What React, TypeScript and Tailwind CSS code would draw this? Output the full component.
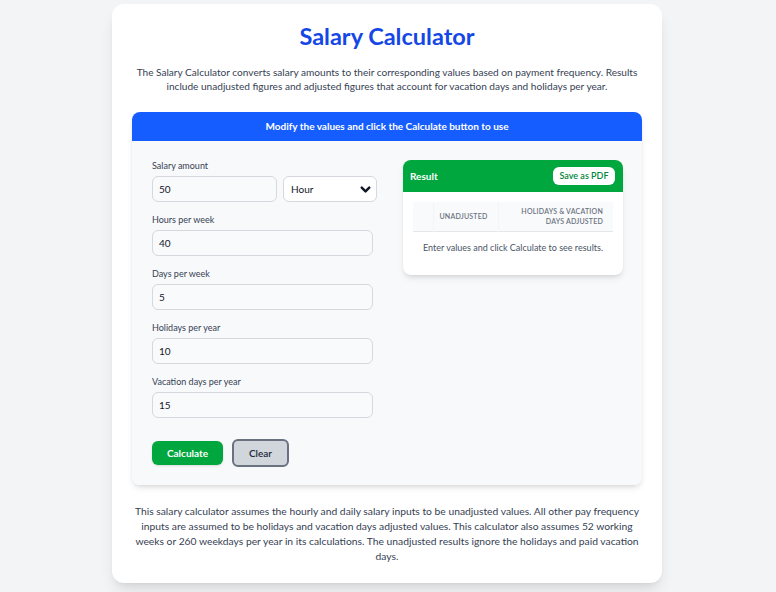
import { ChevronDown } from 'lucide-react';

const fields = [
  { label: 'Hours per week', value: '40' },
  { label: 'Days per week', value: '5' },
  { label: 'Holidays per year', value: '10' },
  { label: 'Vacation days per year', value: '15' },
];

const inputClass =
  'block h-[26px] rounded-md border-[1.5px] border-[#d5d8de] bg-[#f9fafb] px-[6px] text-[10px] text-gray-900 outline-none';

export default function App() {
  return (
    <div className="min-h-screen bg-gray-100 pt-[4px] pb-6" style={{ fontFamily: 'Lato, sans-serif' }}>
      <div className="mx-auto w-[550px] -translate-x-px rounded-xl bg-white px-5 pt-4 pb-[19px] shadow-lg">
        <h1 className="text-center text-[23.5px] leading-8 font-bold text-blue-700">Salary Calculator</h1>
        <p className="mt-[13px] text-center text-[10.1px] leading-[14px] text-gray-700">
          The Salary Calculator converts salary amounts to their corresponding values based on payment frequency. Results
          include unadjusted figures and adjusted figures that account for vacation days and holidays per year.
        </p>

        <div className="mt-[19px] rounded-lg shadow-md">
          <div className="flex h-[29px] items-center justify-center rounded-t-lg bg-[#165dff] text-[10px] font-bold text-white">
            Modify the values and click the Calculate button to use
          </div>
          <div className="flex gap-[26px] rounded-b-lg bg-[#f8f9fb] pt-[19px] pr-[19px] pb-[18px] pl-5">
            <div className="w-[225px]">
              <div className="mb-3">
                <label className="mb-1 block text-[9px] leading-3 text-gray-700">Salary amount</label>
                <div className="flex gap-[6px]">
                  <input className={`${inputClass} w-[125px]`} defaultValue="50" />
                  <div className="flex h-[26px] w-[94px] items-center justify-between rounded-md border-[1.5px] border-[#d5d8de] bg-white pr-[3px] pl-[7px] text-[10px] text-gray-900">
                    <span>Hour</span>
                    <ChevronDown className="h-[15px] w-[15px] text-gray-900" strokeWidth={4} />
                  </div>
                </div>
              </div>
              {fields.map((f) => (
                <div key={f.label} className="mb-3">
                  <label className="mb-1 block text-[9px] leading-3 text-gray-700">{f.label}</label>
                  <input className={`${inputClass} w-[221px]`} defaultValue={f.value} />
                </div>
              ))}
              <div className="mt-[21px] flex items-center gap-[9px]">
                <button className="h-6 w-[71px] rounded-md bg-[#00a63e] text-[10px] font-bold text-white shadow-sm">
                  Calculate
                </button>
                <button className="h-7 w-[57px] rounded-md border-2 border-gray-500 bg-gray-300 text-[10px] font-semibold text-gray-800">
                  Clear
                </button>
              </div>
            </div>

            <div className="w-[221px] self-start overflow-hidden rounded-lg bg-white shadow-md">
              <div className="flex h-8 items-center justify-between bg-[#00a63e] pr-2 pl-[7px]">
                <span className="text-[10px] font-bold text-white">Result</span>
                <button className="h-[18px] w-[62px] rounded-md bg-white text-[9px] font-semibold text-[#00873a]">
                  Save as PDF
                </button>
              </div>
              <div className="px-[10px] pt-[10px] pb-[11px]">
                <table className="w-full border-collapse">
                  <thead>
                    <tr className="h-[29px] border-b border-gray-200 bg-[#f9fafb] text-[7px] leading-[10px] font-semibold tracking-[0.03em] text-gray-500 uppercase">
                      <th className="w-5 border-r border-[#f3f4f6]"></th>
                      <th className="w-[65px] border-r border-[#f3f4f6] pr-[10px] text-right font-semibold">Unadjusted</th>
                      <th className="pr-[10px] text-right font-semibold">
                        Holidays &amp; Vacation
                        <br />
                        Days Adjusted
                      </th>
                    </tr>
                  </thead>
                  <tbody>
                    <tr>
                      <td colSpan={3} className="py-[10px] text-center text-[9px] leading-3 text-gray-600">
                        Enter values and click Calculate to see results.
                      </td>
                    </tr>
                  </tbody>
                </table>
              </div>
            </div>
          </div>
        </div>

        <p className="mt-[19px] text-center text-[10.3px] leading-[15px] text-gray-700">
          This salary calculator assumes the hourly and daily salary inputs to be unadjusted values. All other pay frequency
          <br />
          inputs are assumed to be holidays and vacation days adjusted values. This calculator also assumes 52 working
          <br />
          weeks or 260 weekdays per year in its calculations. The unadjusted results ignore the holidays and paid vacation
          <br />
          days.
        </p>
      </div>
    </div>
  );
}
